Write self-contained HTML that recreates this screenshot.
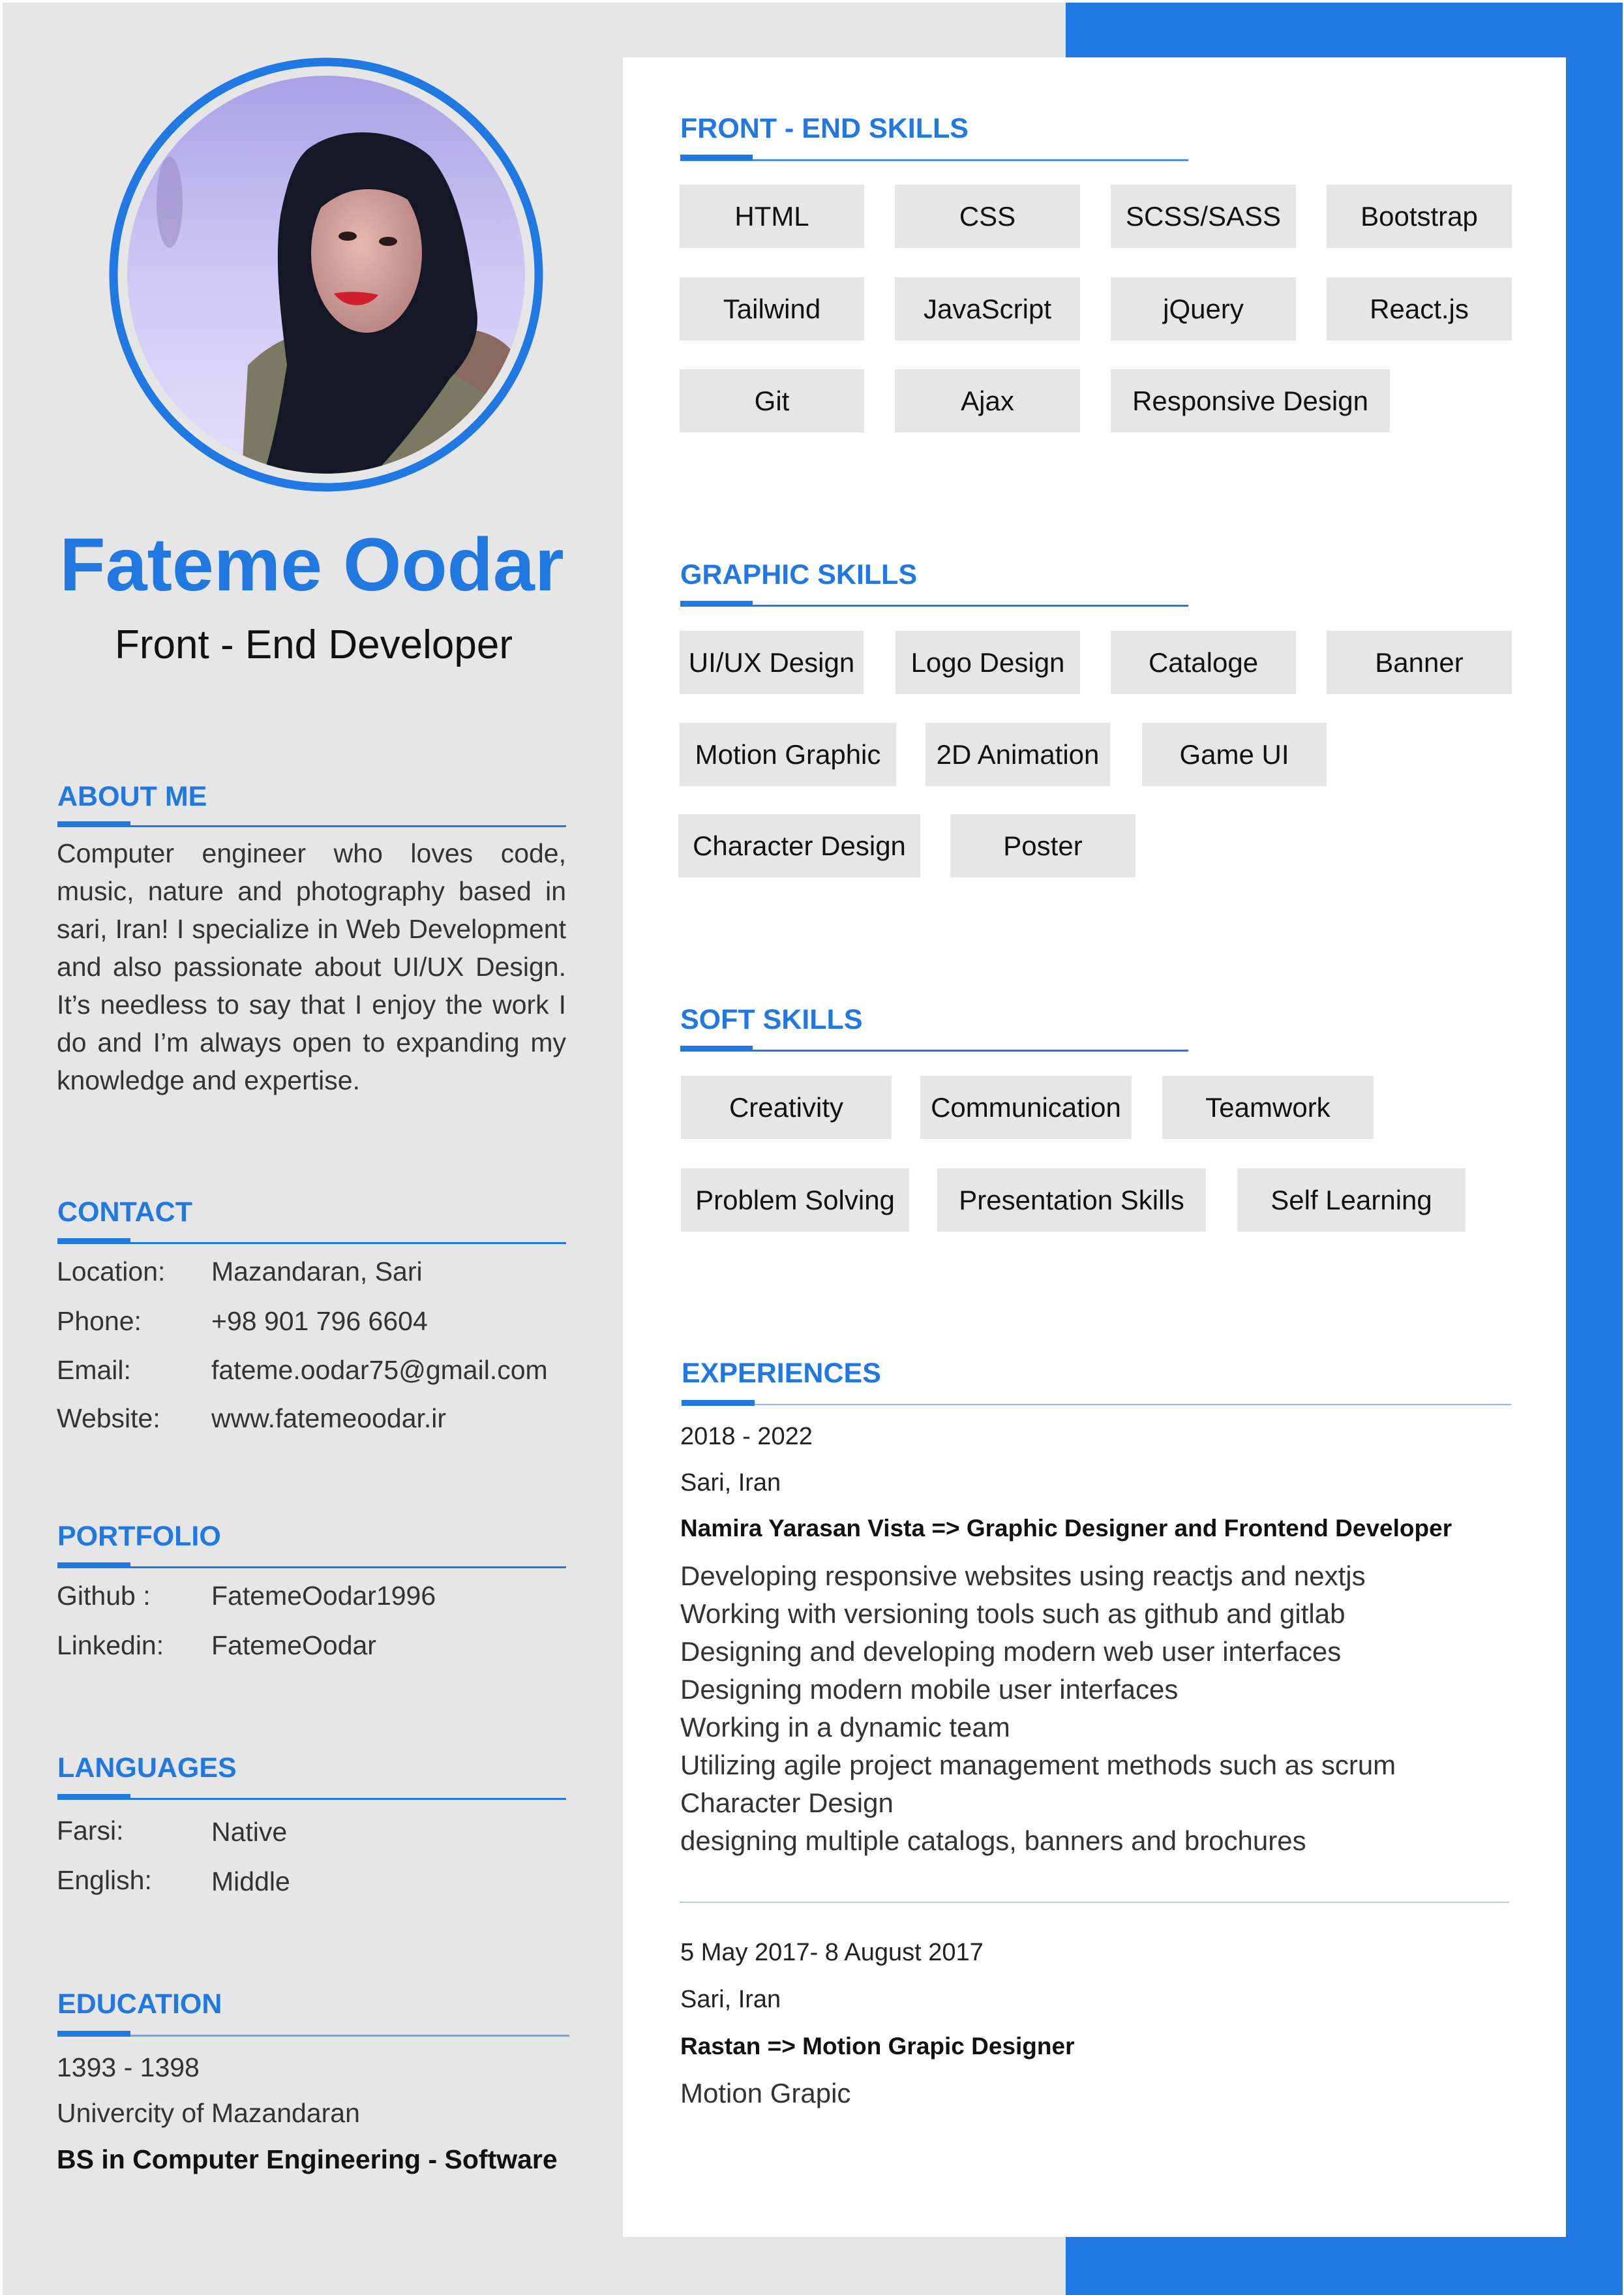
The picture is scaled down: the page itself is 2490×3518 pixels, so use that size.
<!DOCTYPE html>
<html><head><meta charset="utf-8">
<style>
*{margin:0;padding:0;box-sizing:border-box}
body{width:2490px;height:3518px;background:#fff;position:relative;overflow:hidden;font-family:"Liberation Sans",sans-serif;color:#333}
.abs{position:absolute}
.h{position:absolute;font-weight:bold;font-size:43px;line-height:1;color:#2178e0;white-space:nowrap}
.thin{position:absolute;height:3px;background:#2178e0}
.thick{position:absolute;height:9px;background:#2178e0}
.t{position:absolute;font-size:41px;line-height:1;white-space:nowrap;color:#333}
.chip{position:absolute;height:97px;background:#e6e6e6;display:flex;align-items:center;justify-content:center;font-size:42px;color:#111;white-space:nowrap}
.about div{height:58px;line-height:58px;text-align:justify;text-align-last:justify;font-size:41px;color:#333;white-space:nowrap}
.r{position:absolute;font-size:38px;line-height:1;white-space:nowrap;color:#222}
.bl div{height:58px;line-height:58px;font-size:42px;color:#333;white-space:nowrap}
</style></head><body>
<div class="abs" style="left:4px;top:4px;width:1631px;height:3514px;background:#e6e6e6"></div>
<div class="abs" style="left:1634px;top:4px;width:854px;height:3514px;background:#2078e2"></div>
<div class="abs" style="left:955px;top:88px;width:1446px;height:3341px;background:#fff"></div>

<!-- photo -->
<svg class="abs" style="left:160px;top:81px" width="680" height="680" viewBox="160 81 680 680">
<defs>
<clipPath id="c"><circle cx="500" cy="421" r="305"/></clipPath>
<linearGradient id="bg" x1="0" y1="0" x2="0" y2="1"><stop offset="0" stop-color="#a9a0e6"/><stop offset="0.5" stop-color="#cfc8f4"/><stop offset="1" stop-color="#e4defc"/></linearGradient>
<radialGradient id="sk" cx="0.45" cy="0.45" r="0.6"><stop offset="0" stop-color="#e8b8ae"/><stop offset="1" stop-color="#b88482"/></radialGradient>
</defs>
<circle cx="500" cy="421" r="326" fill="none" stroke="#2078e2" stroke-width="13"/>
<g clip-path="url(#c)">
<rect x="190" y="110" width="620" height="620" fill="url(#bg)"/>
<ellipse cx="260" cy="310" rx="20" ry="70" fill="#9a8cc8" opacity="0.6"/>
<path d="M380 560 C420 520 470 500 520 510 L700 500 C760 510 800 540 820 600 L820 740 L370 740 Z" fill="#7a7a62"/>
<path d="M690 505 C740 500 780 520 800 560 L770 620 C740 600 700 580 680 560 Z" fill="#8a6a60"/>
<path d="M470 230 C520 190 610 195 660 240 C710 300 720 400 730 470 C740 520 710 560 690 580 C650 640 600 700 560 740 L400 740 C420 680 430 620 440 560 C430 480 420 400 430 330 C440 280 450 250 470 230 Z" fill="#141826"/>
<ellipse cx="562" cy="388" rx="85" ry="122" fill="url(#sk)"/>
<path d="M478 330 C490 250 560 215 620 240 C650 260 660 300 655 330 C620 290 560 280 520 300 C500 310 490 320 478 330Z" fill="#141826"/>
<ellipse cx="533" cy="362" rx="14" ry="7" fill="#2a1a1a"/>
<ellipse cx="595" cy="370" rx="14" ry="7" fill="#2a1a1a"/>
<path d="M512 450 C535 445 565 448 580 452 C565 472 530 475 512 450Z" fill="#d0202e"/>
</g>
</svg>

<div class="abs" style="left:0;top:809px;width:956px;text-align:center;font-weight:bold;font-size:115px;line-height:1;color:#2178e0">Fateme Oodar</div>
<div class="abs" style="left:0;top:958px;width:962px;text-align:center;font-size:62px;line-height:1;color:#111">Front - End Developer</div>

<!-- ABOUT -->
<div class="h" style="left:88px;top:1200px">ABOUT ME</div>
<div class="thin" style="left:88px;top:1265px;width:780px"></div>
<div class="thick" style="left:88px;top:1259px;width:112px"></div>
<div class="abs about" style="left:87px;top:1279px;width:781px">
<div>Computer engineer who loves code,</div>
<div>music, nature and photography based in</div>
<div>sari, Iran! I specialize in Web Development</div>
<div>and also passionate about UI/UX Design.</div>
<div>It’s needless to say that I enjoy the work I</div>
<div>do and I’m always open to expanding my</div>
<div style="text-align-last:left">knowledge and expertise.</div>
</div>

<!-- CONTACT -->
<div class="h" style="left:88px;top:1837px">CONTACT</div>
<div class="thin" style="left:88px;top:1904px;width:780px"></div>
<div class="thick" style="left:88px;top:1898px;width:112px"></div>
<div class="t" style="left:87px;top:1929px">Location:</div><div class="t" style="left:324px;top:1929px">Mazandaran, Sari</div>
<div class="t" style="left:87px;top:2005px">Phone:</div><div class="t" style="left:324px;top:2005px">+98 901 796 6604</div>
<div class="t" style="left:87px;top:2080px">Email:</div><div class="t" style="left:324px;top:2080px">fateme.oodar75@gmail.com</div>
<div class="t" style="left:87px;top:2154px">Website:</div><div class="t" style="left:324px;top:2154px">www.fatemeoodar.ir</div>

<!-- PORTFOLIO -->
<div class="h" style="left:88px;top:2334px">PORTFOLIO</div>
<div class="thin" style="left:88px;top:2401px;width:780px"></div>
<div class="thick" style="left:88px;top:2395px;width:112px"></div>
<div class="t" style="left:87px;top:2426px">Github :</div><div class="t" style="left:324px;top:2426px">FatemeOodar1996</div>
<div class="t" style="left:87px;top:2502px">Linkedin:</div><div class="t" style="left:324px;top:2502px">FatemeOodar</div>

<!-- LANGUAGES -->
<div class="h" style="left:88px;top:2689px">LANGUAGES</div>
<div class="thin" style="left:88px;top:2756px;width:780px"></div>
<div class="thick" style="left:88px;top:2750px;width:112px"></div>
<div class="t" style="left:87px;top:2786px">Farsi:</div><div class="t" style="left:324px;top:2788px">Native</div>
<div class="t" style="left:87px;top:2862px">English:</div><div class="t" style="left:324px;top:2864px">Middle</div>

<!-- EDUCATION -->
<div class="h" style="left:88px;top:3051px">EDUCATION</div>
<div class="thin" style="left:88px;top:3119px;width:785px;background:#6aa5ea"></div>
<div class="thick" style="left:88px;top:3113px;width:112px"></div>
<div class="t" style="left:87px;top:3149px">1393 - 1398</div>
<div class="t" style="left:87px;top:3219px">Univercity of Mazandaran</div>
<div class="t" style="left:87px;top:3290px;font-weight:bold;color:#111">BS in Computer Engineering - Software</div>

<!-- FRONT-END -->
<div class="h" style="left:1043px;top:176px">FRONT - END SKILLS</div>
<div class="thin" style="left:1043px;top:244px;width:779px;background:#4a8ee6"></div>
<div class="thick" style="left:1043px;top:237px;width:111px"></div>
<div class="chip" style="left:1042px;top:283px;width:283px">HTML</div>
<div class="chip" style="left:1372px;top:283px;width:284px">CSS</div>
<div class="chip" style="left:1703px;top:283px;width:284px">SCSS/SASS</div>
<div class="chip" style="left:2034px;top:283px;width:284px">Bootstrap</div>
<div class="chip" style="left:1042px;top:425px;width:283px">Tailwind</div>
<div class="chip" style="left:1372px;top:425px;width:284px">JavaScript</div>
<div class="chip" style="left:1703px;top:425px;width:284px">jQuery</div>
<div class="chip" style="left:2034px;top:425px;width:284px">React.js</div>
<div class="chip" style="left:1042px;top:566px;width:283px">Git</div>
<div class="chip" style="left:1372px;top:566px;width:284px">Ajax</div>
<div class="chip" style="left:1703px;top:566px;width:428px">Responsive Design</div>

<!-- GRAPHIC -->
<div class="h" style="left:1043px;top:860px">GRAPHIC SKILLS</div>
<div class="thin" style="left:1043px;top:927px;width:779px"></div>
<div class="thick" style="left:1043px;top:921px;width:111px"></div>
<div class="chip" style="left:1042px;top:967px;width:282px">UI/UX Design</div>
<div class="chip" style="left:1373px;top:967px;width:283px">Logo Design</div>
<div class="chip" style="left:1703px;top:967px;width:284px">Cataloge</div>
<div class="chip" style="left:2034px;top:967px;width:284px">Banner</div>
<div class="chip" style="left:1042px;top:1108px;width:332px">Motion Graphic</div>
<div class="chip" style="left:1419px;top:1108px;width:283px">2D Animation</div>
<div class="chip" style="left:1751px;top:1108px;width:283px">Game UI</div>
<div class="chip" style="left:1040px;top:1248px;width:371px">Character Design</div>
<div class="chip" style="left:1457px;top:1248px;width:284px">Poster</div>

<!-- SOFT -->
<div class="h" style="left:1043px;top:1542px">SOFT SKILLS</div>
<div class="thin" style="left:1043px;top:1609px;width:779px"></div>
<div class="thick" style="left:1043px;top:1603px;width:111px"></div>
<div class="chip" style="left:1044px;top:1649px;width:323px">Creativity</div>
<div class="chip" style="left:1411px;top:1649px;width:324px">Communication</div>
<div class="chip" style="left:1782px;top:1649px;width:324px">Teamwork</div>
<div class="chip" style="left:1044px;top:1791px;width:350px">Problem Solving</div>
<div class="chip" style="left:1437px;top:1791px;width:412px">Presentation Skills</div>
<div class="chip" style="left:1897px;top:1791px;width:350px">Self Learning</div>

<!-- EXPERIENCES -->
<div class="h" style="left:1045px;top:2084px">EXPERIENCES</div>
<div class="thin" style="left:1045px;top:2152px;width:1272px;height:2px;background:#8dbbf0"></div>
<div class="thick" style="left:1045px;top:2146px;width:112px"></div>
<div class="r" style="left:1043px;top:2183px">2018 - 2022</div>
<div class="r" style="left:1043px;top:2254px">Sari, Iran</div>
<div class="r" style="left:1043px;top:2324px;font-weight:bold;color:#111;font-size:37px">Namira Yarasan Vista =&gt; Graphic Designer and Frontend Developer</div>
<div class="abs bl" style="left:1043px;top:2387px">
<div>Developing responsive websites using reactjs and nextjs</div>
<div>Working with versioning tools such as github and gitlab</div>
<div>Designing and developing modern web user interfaces</div>
<div>Designing modern mobile user interfaces</div>
<div>Working in a dynamic team</div>
<div>Utilizing agile project management methods such as scrum</div>
<div>Character Design</div>
<div>designing multiple catalogs, banners and brochures</div>
</div>
<div class="abs" style="left:1042px;top:2915px;width:1272px;height:2px;background:#a9cdf4"></div>
<div class="r" style="left:1043px;top:2974px">5 May 2017- 8 August 2017</div>
<div class="r" style="left:1043px;top:3046px">Sari, Iran</div>
<div class="r" style="left:1043px;top:3118px;font-weight:bold;color:#111;font-size:37px">Rastan =&gt; Motion Grapic Designer</div>
<div class="r" style="left:1043px;top:3188px;font-size:42px;color:#333">Motion Grapic</div>
</body></html>
